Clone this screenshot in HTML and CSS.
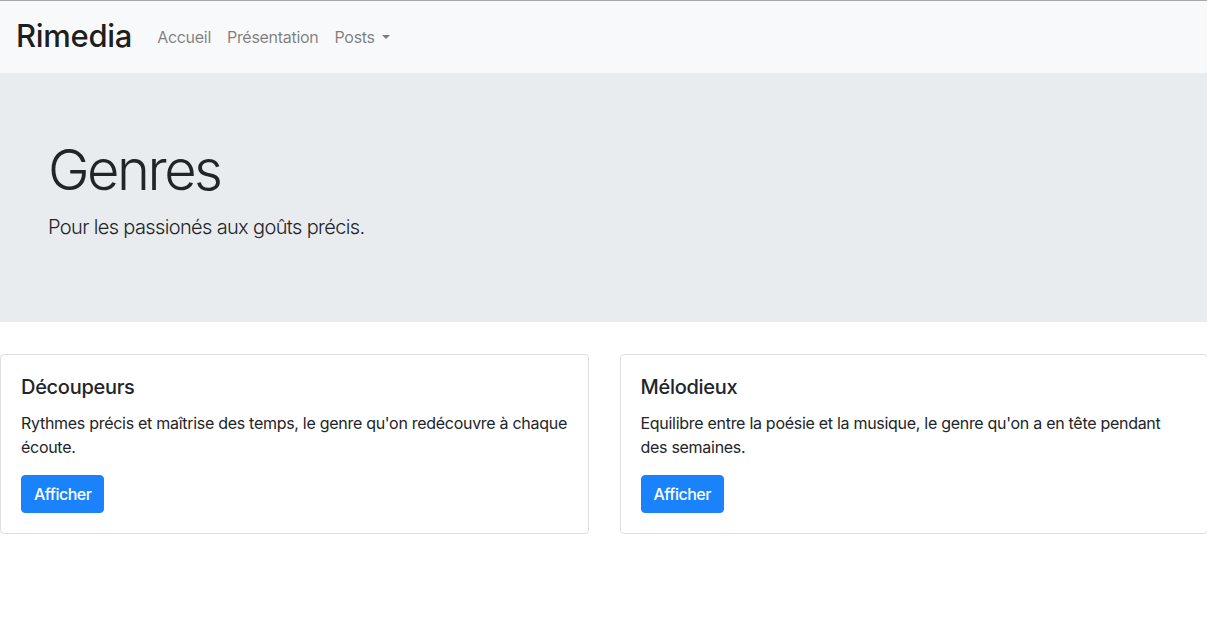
FILE: index.html
```html
<!DOCTYPE html>
<html lang="fr">
<head>
<meta charset="utf-8">
<title>Rimedia</title>
<link rel="stylesheet" href="styles.css">
</head>
<body>
<nav class="navbar">
  <a class="brand" href="#">Rimedia</a>
  <ul class="nav">
    <li><a class="nav-link" href="#">Accueil</a></li>
    <li><a class="nav-link" href="#">Présentation</a></li>
    <li><a class="nav-link dropdown" href="#">Posts</a></li>
  </ul>
</nav>
<header class="jumbotron">
  <div class="jumbo-inner">
    <h1 class="display">Genres</h1>
    <p class="lead">Pour les passionés aux goûts précis.</p>
  </div>
</header>
<main class="cards">
  <section class="card">
    <h5 class="card-title">Découpeurs</h5>
    <p class="card-text">Rythmes précis et maîtrise des temps, le genre qu'on redécouvre à chaque écoute.</p>
    <a class="btn" href="#">Afficher</a>
  </section>
  <section class="card">
    <h5 class="card-title">Mélodieux</h5>
    <p class="card-text">Equilibre entre la poésie et la musique, le genre qu'on a en tête pendant des semaines.</p>
    <a class="btn" href="#">Afficher</a>
  </section>
</main>
</body>
</html>
```
FILE: styles.css
```css
html, body {
  margin: 0;
  padding: 0;
}
body {
  font-family: Inter, "Noto Sans", "Liberation Sans", sans-serif;
  font-size: 16px;
  line-height: 1.5;
  letter-spacing: -0.018em;
  color: #212529;
  background: #fff;
  overflow-x: hidden;
  border-top: 1px solid #a9a9a9;
}
a { text-decoration: none; }

.navbar {
  display: flex;
  align-items: center;
  height: 72px;
  padding: 0 16px;
  background: #f8f9fa;
  box-sizing: border-box;
}
.brand {
  font-size: 31px;
  font-weight: 500;
  color: rgba(0,0,0,.9);
  margin-right: 17px;
  line-height: 1;
  letter-spacing: -0.3px;
  padding-bottom: 4px;
}
.nav {
  display: flex;
  list-style: none;
  margin: 0;
  padding: 0;
}
.nav-link {
  display: block;
  padding: 8px 8px;
  color: rgba(0,0,0,.5);
  font-size: 16px;
}
.dropdown::after {
  content: "";
  display: inline-block;
  margin-left: .45em;
  vertical-align: .255em;
  border-top: .3em solid;
  border-right: .3em solid transparent;
  border-left: .3em solid transparent;
}

.jumbotron {
  background: #e9ecef;
  padding: 64px 32px;
  margin-bottom: 32px;
}
.jumbo-inner {
  padding: 0 16px;
}
.display {
  font-size: 56px;
  font-weight: 300;
  line-height: 1.2;
  margin: 0 0 8px;
  letter-spacing: -0.045em;
}
.lead {
  font-size: 20px;
  font-weight: 300;
  margin: 0 0 16px;
  letter-spacing: -0.032em;
}

.cards {
  display: grid;
  grid-template-columns: 1fr 1fr;
  gap: 31px;
  margin-right: -1px;
}
.card {
  border: 1px solid rgba(0,0,0,.125);
  border-radius: 4px;
  padding: 20px;
}
.card-title {
  font-size: 20px;
  font-weight: 500;
  line-height: 1.2;
  margin: 0 0 12px;
}
.card-text {
  margin: 0 0 16px;
}
.btn {
  display: inline-block;
  background: #1a82fb;
  color: #fff;
  border: 1px solid #1a82fb;
  border-radius: 4px;
  padding: 6px 12px;
  font-size: 16px;
  font-weight: 500;
  line-height: 1.5;
  letter-spacing: -0.03em;
}
```
